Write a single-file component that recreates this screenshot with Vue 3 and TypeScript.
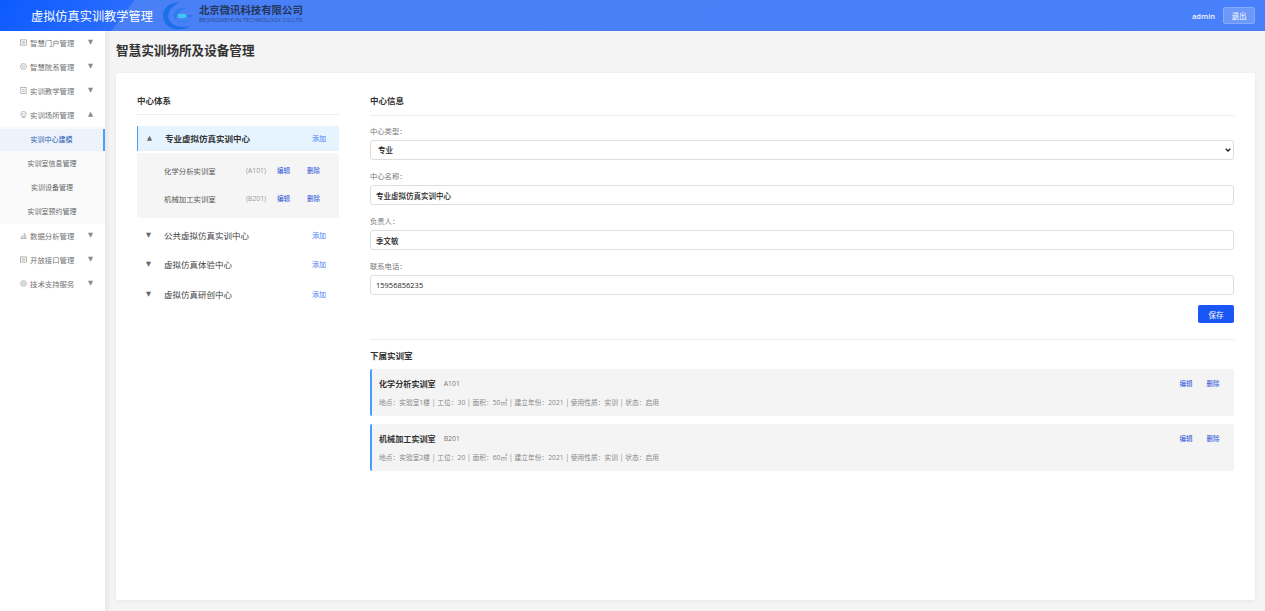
<script setup lang="ts">
interface NavItem { label: string; icon: string; open?: boolean }
const navTop: NavItem[] = [
  { label: '智慧门户管理', icon: 'box' },
  { label: '智慧院系管理', icon: 'target' },
  { label: '实训教学管理', icon: 'doc' },
  { label: '实训场所管理', icon: 'home', open: true },
]
const navSub = ['实训中心建模', '实训室信息管理', '实训设备管理', '实训室预约管理']
const navBottom: NavItem[] = [
  { label: '数据分析管理', icon: 'chart' },
  { label: '开放接口管理', icon: 'box' },
  { label: '技术支持服务', icon: 'gear' },
]
const treeRooms = [
  { name: '化学分析实训室', code: '(A101)' },
  { name: '机械加工实训室', code: '(B201)' },
]
const otherCenters = ['公共虚拟仿真实训中心', '虚拟仿真体验中心', '虚拟仿真研创中心']
const inputs = [
  { label: '中心名称：', value: '专业虚拟仿真实训中心' },
  { label: '负责人：', value: '季文敏' },
  { label: '联系电话：', value: '15956856235' },
]
const rooms = [
  { name: '化学分析实训室', code: 'A101', meta: '地点：实验室1楼 | 工位：30 | 面积：50㎡ | 建立年份：2021 | 使用性质：实训 | 状态：启用' },
  { name: '机械加工实训室', code: 'B201', meta: '地点：实验室2楼 | 工位：20 | 面积：60㎡ | 建立年份：2021 | 使用性质：实训 | 状态：启用' },
]
</script>

<template>
  <div class="page">
    <header class="topbar">
      <div class="brand">虚拟仿真实训教学管理</div>
      <div class="logo">
        <svg class="logo-mark" width="32" height="30" viewBox="0 0 32 30">
          <path d="M18 1.500C9 .5 1.500 6 1 14c-.5 8 6.500 14.500 15 14.500 5 0 9.500-1.500 12.500-4-4 1.500-9.500 2-13.500.5C9 23 5.500 18.500 6.500 13.500 7.500 8 11.500 4 18 1.500z" fill="#1b70ea" />
          <path d="M25 7c-6-.5-11.500 1.500-13 5.500-.8 2.500 0 5 2 6.500-.5-3 .5-6 3.500-8.500 2-1.500 5-2.800 7.500-3.500z" fill="#2a7cee" />
          <path d="M14 20c5 2.500 10 1.500 14-1-4 .5-9 .8-14 1z" fill="#2f84ec" />
          <ellipse cx="20" cy="15" rx="4.500" ry="2.200" fill="#3ccbee" />
          <circle cx="26.500" cy="15" r="1" fill="#1e68d0" />
          <circle cx="29.500" cy="15" r=".8" fill="#1e68d0" />
        </svg>
        <div class="logo-text">
          <div class="logo-cn">北京微讯科技有限公司</div>
          <div class="logo-en">BEIJINGWEIXUN TECHNOLOGY CO.LTD</div>
        </div>
      </div>
      <div class="user">
        <span class="user-name">admin</span>
        <button class="logout" type="button">退出</button>
      </div>
    </header>

    <div class="body">
      <aside class="sidebar">
        <div v-for="item in navTop" :key="item.label" class="nav-item">
          <svg class="nav-icon" viewBox="0 0 8 8" width="7" height="7" fill="none" stroke="#999" stroke-width=".8">
            <template v-if="item.icon === 'box'"><rect x=".5" y="1" width="7" height="6" /><path d="M2 3.200h4M2 4.800h4" /></template>
            <template v-else-if="item.icon === 'target'"><circle cx="4" cy="4" r="3.400" /><circle cx="4" cy="4" r="1.200" /></template>
            <template v-else-if="item.icon === 'doc'"><rect x="1" y=".5" width="6" height="7" /><path d="M2.500 3h3M2.500 5h3" /></template>
            <template v-else><circle cx="4" cy="3.500" r="3" /><path d="M2 7.500h4M2.500 3.500h3" /></template>
          </svg>
          <span class="nav-label">{{ item.label }}</span>
          <span class="nav-arrow">{{ item.open ? '▲' : '▼' }}</span>
        </div>
        <div class="nav-sub">
          <div v-for="(sub, i) in navSub" :key="sub" class="sub-item" :class="{ active: i === 0 }">{{ sub }}</div>
        </div>
        <div v-for="item in navBottom" :key="item.label" class="nav-item">
          <svg class="nav-icon" viewBox="0 0 8 8" width="7" height="7" fill="none" stroke="#999" stroke-width=".8">
            <template v-if="item.icon === 'chart'"><path d="M.5 7.500h7M1.500 7V5M3.200 7V3.500M4.900 7V1M6.600 7V3" /></template>
            <template v-else-if="item.icon === 'box'"><rect x=".5" y="1" width="7" height="6" /><path d="M2 3.200h4M2 4.800h4" /></template>
            <template v-else><circle cx="4" cy="4" r="3.200" /><circle cx="4" cy="4" r="1.300" /></template>
          </svg>
          <span class="nav-label">{{ item.label }}</span>
          <span class="nav-arrow">▼</span>
        </div>
      </aside>

      <main class="main">
        <h1 class="page-title">智慧实训场所及设备管理</h1>
        <section class="card">
          <div class="tree">
            <h2 class="tree-title">中心体系</h2>
            <div class="center-row current">
              <span class="caret">▲</span>
              <span class="center-name">专业虚拟仿真实训中心</span>
              <a class="add">添加</a>
            </div>
            <div class="tree-rooms">
              <div v-for="room in treeRooms" :key="room.code" class="tree-room">
                <span class="tree-room-name">{{ room.name }}</span>
                <span class="tree-room-code">{{ room.code }}</span>
                <a class="link edit">编辑</a>
                <a class="link">删除</a>
              </div>
            </div>
            <div v-for="center in otherCenters" :key="center" class="center-row">
              <span class="caret">▼</span>
              <span class="center-name">{{ center }}</span>
              <a class="add">添加</a>
            </div>
          </div>

          <div class="detail">
            <h2 class="detail-title">中心信息</h2>
            <div class="field">
              <label class="field-label">中心类型：</label>
              <div class="select-wrap">
                <select class="control select">
                  <option>专业</option>
                </select>
                <svg class="chevron" width="6" height="4" viewBox="0 0 6 4">
                  <path d="M.7.700 3 3l2.300-2.300" fill="none" stroke="#222" stroke-width="1.300" />
                </svg>
              </div>
            </div>
            <div v-for="f in inputs" :key="f.label" class="field">
              <label class="field-label">{{ f.label }}</label>
              <input class="control" :value="f.value" />
            </div>
            <div class="actions">
              <button class="save" type="button">保存</button>
            </div>
            <h2 class="rooms-title">下属实训室</h2>
            <div v-for="room in rooms" :key="room.code" class="room">
              <div class="room-head">
                <span class="room-name">{{ room.name }}</span>
                <span class="room-code">{{ room.code }}</span>
                <span class="room-links">
                  <a class="link">编辑</a>
                  <a class="link">删除</a>
                </span>
              </div>
              <div class="room-meta">{{ room.meta }}</div>
            </div>
          </div>
        </section>
      </main>
    </div>
  </div>
</template>

<style>
html, body { margin: 0; overflow: hidden; }
</style>

<style scoped>
.page {
  height: 611px;
  display: flex;
  flex-direction: column;
  font-family: "Open Sans", "Noto Sans CJK SC", sans-serif;
  background: #f4f4f4;
  color: #333;
}
.topbar {
  height: 31px;
  flex: none;
  display: flex;
  align-items: center;
  background: linear-gradient(127deg, #0c5aff 0, #2a6cfd 107px, #4a80f5 108px, #4880fb 100%);
  position: relative;
  z-index: 2;
}
.brand {
  margin-left: 31px;
  font-size: 12.2px;
  color: #fff;
  white-space: nowrap;
}
.logo {
  margin-left: 9px;
  display: flex;
  align-items: center;
  gap: 5px;
}
.logo-mark { display: block; }
.logo-text { line-height: 1; }
.logo-cn {
  font-size: 10.4px;
  font-weight: 700;
  color: #24365c;
  white-space: nowrap;
  line-height: 11px;
  margin-top: -2px;
}
.logo-en {
  font-size: 5.800px;
  color: #2a4c90;
  white-space: nowrap;
  line-height: 7px;
  margin-top: 1px;
}
.user {
  margin-left: auto;
  margin-right: 10px;
  display: flex;
  align-items: center;
  gap: 8px;
}
.user-name {
  font-size: 7.500px;
  color: #f0f4ff;
  font-weight: 600;
}
.logout {
  width: 32px;
  height: 17px;
  padding: 0;
  font: inherit;
  font-size: 7.500px;
  color: #fff;
  background: #6c98f8;
  border: 1px solid #86aafa;
  border-radius: 2px;
}
.body {
  flex: 1;
  display: flex;
  min-height: 0;
}
.sidebar {
  width: 105px;
  flex: none;
  background: #fff;
  box-shadow: 2px 0 5px rgba(0, 0, 0, 0.07);
}
.nav-item {
  height: 24px;
  box-sizing: border-box;
  padding: 0 0 2px 20px;
  display: flex;
  align-items: center;
  font-size: 7.400px;
  color: #707070;
}
.nav-icon { flex: none; }
.nav-label {
  margin-left: 3px;
  width: 58px;
  white-space: nowrap;
}
.nav-arrow {
  font-size: 6.500px;
  color: #8a8a8a;
  font-family: "DejaVu Sans", sans-serif;
}
.nav-sub {
  background: #fafafa;
  padding: 2px 0 1px;
  display: flex;
  flex-direction: column;
  gap: 2px;
}
.sub-item {
  height: 22px;
  line-height: 22px;
  text-align: center;
  font-size: 7px;
  color: #666;
  box-sizing: border-box;
  padding-right: 1px;
}
.sub-item.active {
  background: #edf2fb;
  color: #2a5bb0;
  border-right: 2px solid #4a9eff;
  padding-right: 0;
}
.main {
  flex: 1;
  min-width: 0;
  display: flex;
  flex-direction: column;
  padding: 10px 10px 11px 11px;
}
.page-title {
  margin: 0 0 12px;
  font-size: 12.600px;
  line-height: 20px;
  font-weight: 700;
  color: #333;
}
.card {
  flex: 1;
  background: #fff;
  border-radius: 3px;
  box-shadow: 0 1px 4px rgba(0, 0, 0, 0.06);
  padding: 22px 21px 0;
  display: flex;
  gap: 31px;
  min-height: 0;
}
.tree {
  width: 202px;
  flex: none;
}
.tree-title {
  margin: 0 0 11px;
  padding-bottom: 7px;
  border-bottom: 1px solid #eee;
  font-size: 8.500px;
  line-height: 12px;
  font-weight: 700;
  color: #333;
}
.center-row {
  height: 25px;
  margin-top: 4.500px;
  display: flex;
  align-items: center;
  font-size: 8.500px;
  color: #444;
  padding: 0 13px 1px 9px;
  box-sizing: border-box;
}
.center-row.current {
  margin-top: 0;
  background: #e6f4ff;
  border-left: 1px solid #4a9eff;
  padding: 0 13px 2px 9px;
}
.center-row.current .center-name { font-weight: 700; color: #333; }
.caret {
  width: 18px;
  flex: none;
  font-size: 6.500px;
  color: #666;
  font-family: "DejaVu Sans", sans-serif;
}
.center-name { flex: 1; white-space: nowrap; }
.add { font-size: 7px; color: #4a7cf5; }
.tree-rooms {
  margin-top: 2px;
  padding: 3px 19px 6px 27px;
  background: #f5f5f5;
  border-radius: 2px;
}
.tree-room {
  height: 28px;
  display: flex;
  align-items: center;
  font-size: 7.400px;
  color: #555;
}
.tree-room-name { width: 82px; white-space: nowrap; }
.tree-room-code {
  width: 31px;
  font-size: 6.800px;
  color: #999;
}
.link {
  font-size: 6.500px;
  color: #1f50d8;
  white-space: nowrap;
}
.edit { margin-right: 17px; }
.detail {
  flex: 1;
  min-width: 0;
}
.detail-title {
  margin: 0 0 10px;
  padding-bottom: 8px;
  border-bottom: 1px solid #eee;
  font-size: 8.500px;
  line-height: 12px;
  font-weight: 700;
  color: #333;
}
.field { margin-bottom: 11px; }
.field-label {
  display: block;
  font-size: 7.300px;
  line-height: 10px;
  color: #777;
  margin-bottom: 4px;
}
.control {
  display: block;
  width: 100%;
  height: 20px;
  box-sizing: border-box;
  border: 1px solid #ddd;
  border-radius: 3px;
  background: #fff;
  padding: 0 5px;
  font-family: inherit;
  font-size: 7.500px;
  font-weight: 500;
  color: #1a1a1a;
  outline: none;
}
.select-wrap { position: relative; }
.select {
  appearance: none;
  padding: 0 7px;
}
.chevron {
  position: absolute;
  right: 3px;
  top: 8px;
  pointer-events: none;
}
.actions {
  display: flex;
  justify-content: flex-end;
  margin-top: -1px;
  padding-bottom: 16px;
  border-bottom: 1px solid #eee;
}
.save {
  width: 36px;
  height: 18px;
  padding: 0;
  border: none;
  border-radius: 2px;
  background: #1a56f5;
  color: #fff;
  font-family: inherit;
  font-size: 7.500px;
}
.rooms-title {
  margin: 10px 0 7px;
  font-size: 8.500px;
  line-height: 12px;
  font-weight: 700;
  color: #333;
}
.room {
  height: 47px;
  box-sizing: border-box;
  margin-bottom: 8px;
  padding: 8px 14.500px 0 7px;
  background: #f4f4f4;
  border-left: 2px solid #4a9eff;
  border-radius: 2px;
}
.room-head {
  display: flex;
  align-items: center;
  height: 12px;
}
.room-name {
  font-size: 8.100px;
  font-weight: 700;
  color: #333;
  white-space: nowrap;
}
.room-code {
  margin-left: 8px;
  font-size: 6.900px;
  color: #777;
}
.room-links {
  margin-left: auto;
  display: flex;
  gap: 14px;
}
.room-meta {
  margin-top: 9px;
  font-size: 6.750px;
  line-height: 10px;
  color: #888;
  white-space: nowrap;
}
</style>
